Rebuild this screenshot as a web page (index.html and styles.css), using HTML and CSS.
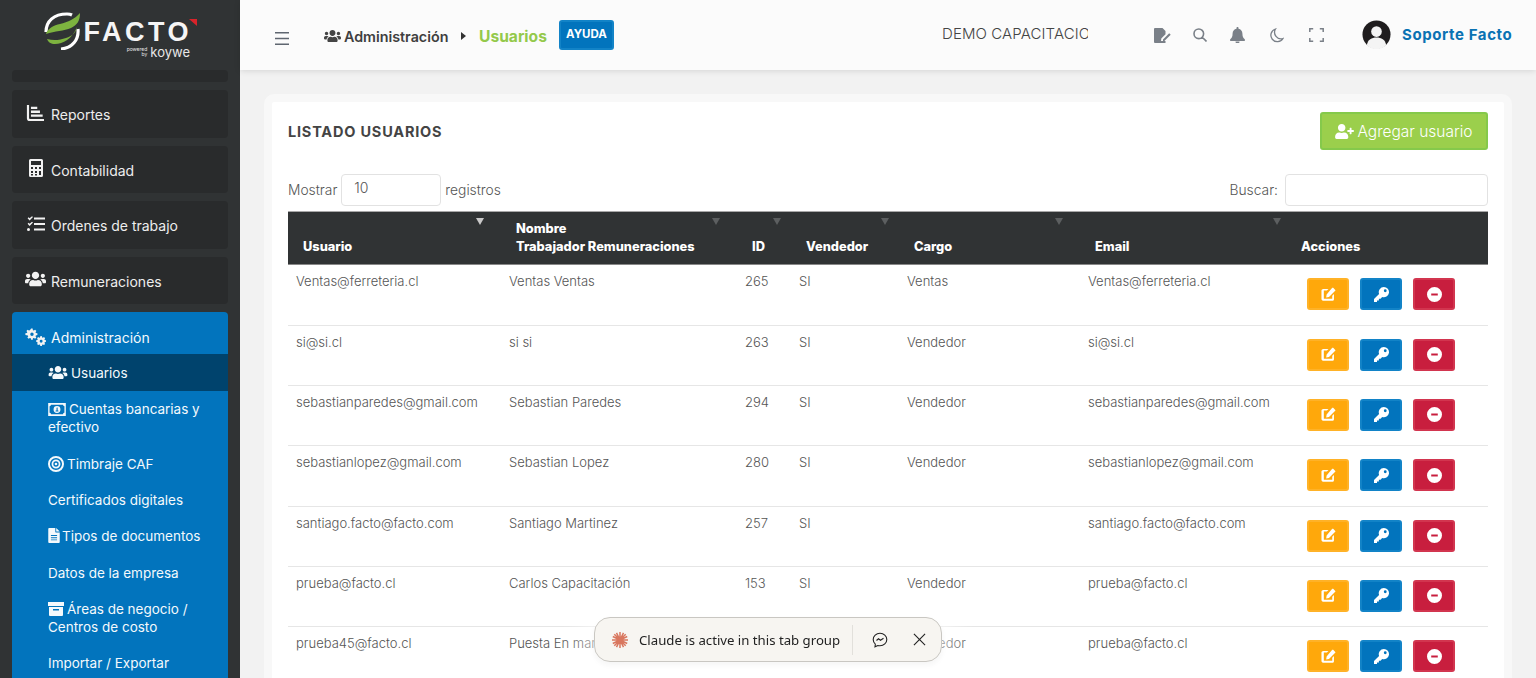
FILE: index.html
```html
<!DOCTYPE html>
<html lang="es">
<head>
  <meta charset="UTF-8">
  <meta name="viewport" content="width=device-width, initial-scale=1.0">
  <title>Listado Usuarios</title>
  <link rel="stylesheet" href="styles.css">
</head>
<body>
  <svg class="sprite" xmlns="http://www.w3.org/2000/svg">
    <symbol id="i-users" viewBox="0 0 640 512"><path d="M96 224c35.3 0 64-28.7 64-64s-28.7-64-64-64-64 28.7-64 64 28.7 64 64 64zm448 0c35.3 0 64-28.7 64-64s-28.7-64-64-64-64 28.7-64 64 28.7 64 64 64zm32 32h-64c-17.6 0-33.5 7.1-45.1 18.6 40.3 22.1 68.9 62 75.1 109.4h66c17.7 0 32-14.3 32-32v-32c0-35.3-28.7-64-64-64zm-256 0c61.9 0 112-50.1 112-112S381.9 32 320 32 208 82.1 208 144s50.1 112 112 112zm76.8 32h-8.3c-20.8 10-43.9 16-68.5 16s-47.6-6-68.5-16h-8.3C179.6 288 128 339.6 128 403.2V432c0 26.5 21.5 48 48 48h288c26.5 0 48-21.5 48-48v-28.8c0-63.6-51.6-115.2-115.2-115.2zm-223.7-13.4C161.5 263.1 145.6 256 128 256H64c-35.3 0-64 28.7-64 64v32c0 17.7 14.3 32 32 32h65.9c6.3-47.4 34.9-87.3 75.2-109.4z"/></symbol>
    <symbol id="i-chart" viewBox="0 0 20 20"><path d="M1 1h2.4v14.6c0 .6.4 1 1 1H20V19H4c-1.700 0-3-1.300-3-3zM5.500 3h7v2.600h-7zM5.500 7.300h10v2.600h-10zM5.500 11.600h13v2.600h-13z"/></symbol>
    <symbol id="i-calc" viewBox="0 0 14 18"><path fill-rule="evenodd" d="M1.500 0h11A1.500 1.500 0 0 1 14 1.500v15a1.500 1.500 0 0 1-1.500 1.500h-11A1.500 1.500 0 0 1 0 16.500v-15A1.500 1.500 0 0 1 1.500 0zM2 2v4h10V2zM2 8v2h2V8zm4 0v2h2V8zm4 0v2h2V8zM2 12v2h2v-2zm4 0v2h2v-2zm4 0v4h2v-4zM2 15v1.500h2V15zm4 0v1.500h2V15z"/></symbol>
    <symbol id="i-tasks" viewBox="0 0 18 16"><path d="M7 1.500h11v2H7zM7 7h11v2H7zM7 12.500h11v2H7zM.6 2.200l1-.9 1 1L5 .2l1 .9-3.400 3.400zM.6 7.700l1-.9 1 1L5 5.700l1 .9L2.600 10zM0 13.500a1.500 1.500 0 1 1 3 0 1.500 1.500 0 0 1-3 0z"/></symbol>
    <symbol id="i-cogs" viewBox="0 0 22 18"><path d="M7 0l1 .2.300 1.600 1 .4 1.300-.9 1.300 1.300-.9 1.300.4 1 1.600.3v1.800l-1.600.3-.4 1 .9 1.300-1.300 1.300-1.300-.9-1 .4L8.200 12H6.400l-.3-1.600-1-.4-1.300.9-1.300-1.300.9-1.300-.4-1L.4 7V5.200L2 4.900l.4-1-.9-1.300 1.300-1.300 1.300.9 1-.4L6.400 0zm.3 4.300a1.800 1.800 0 1 0 0 3.600 1.800 1.800 0 0 0 0-3.600z"/><path d="M16.800 8l.9.1.3 1.300.8.400 1.100-.7 1.200 1.200-.7 1.100.3.800 1.300.3v1.600l-1.300.3-.3.800.7 1.100-1.200 1.200-1.100-.7-.8.3-.3 1.300h-1.700l-.3-1.300-.8-.3-1.100.7-1.200-1.200.7-1.100-.3-.8-1.300-.3v-1.600l1.300-.3.3-.8-.7-1.100 1.200-1.200 1.100.7.800-.4.300-1.300zm.1 4a1.500 1.500 0 1 0 0 3 1.500 1.500 0 0 0 0-3z"/></symbol>
    <symbol id="i-money" viewBox="0 0 19 14"><path fill-rule="evenodd" d="M0 0h19v14H0zm3 2a1.500 1.500 0 0 1-1.500 1.500v7A1.500 1.500 0 0 1 3 12h13a1.500 1.500 0 0 1 1.500-1.500v-7A1.500 1.500 0 0 1 16 2zm6.500 1.300a3.700 3.700 0 1 1 0 7.400 3.700 3.700 0 0 1 0-7.400zM9 5v3.200H8V9.200h3V8.200h-.8V4.800z"/></symbol>
    <symbol id="i-target" viewBox="0 0 18 18"><path fill-rule="evenodd" d="M9 0a9 9 0 1 1 0 18A9 9 0 0 1 9 0zm0 2.200a6.800 6.800 0 1 0 0 13.600A6.800 6.800 0 0 0 9 2.200zm0 1.800a5 5 0 1 1 0 10A5 5 0 0 1 9 4zm0 2a3 3 0 1 0 0 6 3 3 0 0 0 0-6zm0 1.500a1.500 1.500 0 1 1 0 3 1.500 1.500 0 0 1 0-3z"/></symbol>
    <symbol id="i-file" viewBox="0 0 13 17"><path fill-rule="evenodd" d="M1 0h7v4.500c0 .3.200.5.500.5H13v11a1 1 0 0 1-1 1H1a1 1 0 0 1-1-1V1a1 1 0 0 1 1-1zm8 0l4 4H9zM3 8v1h7V8zm0 2.500v1h7v-1zM3 13v1h7v-1z"/></symbol>
    <symbol id="i-archive" viewBox="0 0 16 14"><path fill-rule="evenodd" d="M0 0h16v4H0zM1 5h14v8a1 1 0 0 1-1 1H2a1 1 0 0 1-1-1zm4 2v1.500h6V7z"/></symbol>
    <symbol id="i-bars" viewBox="0 0 14 13"><path d="M0 0h14v1.600H0zM0 5.700h14v1.600H0zM0 11.400h14V13H0z"/></symbol>
    <symbol id="i-sign" viewBox="0 0 17 15"><path d="M1 0h7.500l3 3v3.200L7.300 10.500 7 13h4.500v2H1a1 1 0 0 1-1-1V1a1 1 0 0 1 1-1zM2 11.500l2-2.500 1.300 1.500L4 12.800zM9 11.500l6.200-6.300 1.500 1.500-6.300 6.300H9z"/></symbol>
    <symbol id="i-search" viewBox="0 0 14 14"><path fill="none" stroke="currentColor" stroke-width="1.600" d="M5.800 1a4.800 4.800 0 1 1 0 9.600 4.800 4.800 0 0 1 0-9.600zM9.300 9.300L13.500 13.500"/></symbol>
    <symbol id="i-bell" viewBox="0 0 15 16"><path d="M7.500 0c.6 0 1 .4 1 1v.7c2.400.5 3.900 2.400 3.900 4.800 0 3.400 1.100 4.600 2.100 5.500.3.300.5.600.5.900 0 .6-.4 1-1 1H1c-.6 0-1-.4-1-1 0-.3.200-.6.500-.9 1-.9 2.100-2.100 2.100-5.500 0-2.400 1.500-4.300 3.900-4.800V1c0-.6.400-1 1-1zM5.500 14.500h4a2 2 0 0 1-4 0z"/></symbol>
    <symbol id="i-moon" viewBox="0 0 14 15"><path fill="none" stroke="currentColor" stroke-width="1.300" d="M5.500 1A6.500 6.500 0 1 0 13 10.500 6.500 6.500 0 0 1 5.500 1z"/></symbol>
    <symbol id="i-expand" viewBox="0 0 15 14"><path fill="none" stroke="currentColor" stroke-width="1.500" d="M.8 4V.8h3.400M10.800.8h3.400V4M14.200 10v3.200h-3.400M4.200 13.200H.8V10"/></symbol>
    <symbol id="i-useradd" viewBox="0 0 640 512"><path d="M624 208h-64v-64c0-8.800-7.200-16-16-16h-32c-8.800 0-16 7.200-16 16v64h-64c-8.800 0-16 7.200-16 16v32c0 8.800 7.200 16 16 16h64v64c0 8.800 7.200 16 16 16h32c8.800 0 16-7.200 16-16v-64h64c8.800 0 16-7.200 16-16v-32c0-8.800-7.200-16-16-16zm-400 48c70.700 0 128-57.300 128-128S294.700 0 224 0 96 57.300 96 128s57.300 128 128 128zm89.600 32h-16.700c-22.200 10.200-46.900 16-72.900 16s-50.600-5.800-72.900-16h-16.700C60.200 288 0 348.200 0 422.400V464c0 26.500 21.500 48 48 48h352c26.500 0 48-21.500 48-48v-41.600c0-74.200-60.200-134.400-134.400-134.400z"/></symbol>
    <symbol id="i-edit" viewBox="0 0 16 15"><path d="M2.500 1.500H8L6.300 3.300H3V12h9V8.700L13.800 7v5.500c0 1-.8 1.700-1.800 1.700H3c-1.500 0-2.500-.8-2.500-2V3.300c0-1 .9-1.800 2-1.800zM13 .4l2.200 2.200c.3.300.3.700 0 1L8.500 10.200 5.500 10.700 6 7.600 12 .4c.3-.2.700-.2 1 0z"/></symbol>
    <symbol id="i-key" viewBox="0 0 16 16"><path fill-rule="evenodd" d="M10.500 0a5.500 5.500 0 1 1-1.800 10.700L7 12.500H5.200v2H3.200V16H0v-3.200l5.400-5.400A5.500 5.500 0 0 1 10.500 0zM12 2.500a1.500 1.500 0 1 0 0 3 1.500 1.500 0 0 0 0-3z"/></symbol>
    <symbol id="i-minus" viewBox="0 0 16 16"><path fill-rule="evenodd" d="M8 0a8 8 0 1 1 0 16A8 8 0 0 1 8 0zM4.500 7v2h7V7z"/></symbol>
  </svg>

  <div class="app">
    <aside class="sidebar">
      <div class="logo">
        <svg class="logo-globe" viewBox="0 0 38 38">
          <path fill="none" stroke="#fff" stroke-width="3.200" d="M3 20C3 9 11 2 24 2c2 0 4 .5 5 1M35 17c1 11-6 19-17 20"/>
          <path fill="#7db33f" d="M37 1c0 8-3 12-9 15-7 3-16 3-25 6 1-5 8-9 14-10 8-2 15-5 20-11z"/>
          <path fill="#7db33f" d="M34 15c-1 6-5 9-11 11-6 2-12 3-19 1 1 3 4 5 8 5 8 0 17-5 22-17z"/>
        </svg>
        <div class="logo-text">
          <span class="logo-name">FACTO</span>
          <span class="logo-by"><small>powered by</small> koywe</span>
        </div>
        <span class="logo-mark"></span>
      </div>
      <nav class="menu">
        <div class="menu-item menu-stub"></div>
        <a class="menu-item"><svg class="mi-icon mi-chart"><use href="#i-chart"/></svg>Reportes</a>
        <a class="menu-item"><svg class="mi-icon mi-calc"><use href="#i-calc"/></svg>Contabilidad</a>
        <a class="menu-item"><svg class="mi-icon mi-tasks"><use href="#i-tasks"/></svg>Ordenes de trabajo</a>
        <a class="menu-item"><svg class="mi-icon mi-users"><use href="#i-users"/></svg>Remuneraciones</a>
        <div class="menu-open">
          <a class="menu-head"><svg class="mi-icon mi-users"><use href="#i-cogs"/></svg>Administración</a>
          <a class="sub-item active"><svg class="si-users"><use href="#i-users"/></svg>Usuarios</a>
          <a class="sub-item"><svg class="si-money"><use href="#i-money"/></svg>Cuentas bancarias y efectivo</a>
          <a class="sub-item"><svg class="si-target"><use href="#i-target"/></svg>Timbraje CAF</a>
          <a class="sub-item">Certificados digitales</a>
          <a class="sub-item"><svg class="si-file"><use href="#i-file"/></svg>Tipos de documentos</a>
          <a class="sub-item">Datos de la empresa</a>
          <a class="sub-item"><svg class="si-archive"><use href="#i-archive"/></svg>Áreas de negocio / Centros de costo</a>
          <a class="sub-item">Importar / Exportar</a>
        </div>
      </nav>
    </aside>

    <main class="main">
      <header class="topbar">
        <svg class="burger"><use href="#i-bars"/></svg>
        <div class="crumbs">
          <svg class="crumb-icon"><use href="#i-users"/></svg>
          <span class="crumb">Administración</span>
          <span class="crumb-caret"></span>
          <span class="crumb-now">Usuarios</span>
          <a class="help">AYUDA</a>
        </div>
        <div class="company">DEMO CAPACITACION</div>
        <div class="tools">
          <svg class="tool-sign"><use href="#i-sign"/></svg>
          <svg class="tool-search"><use href="#i-search"/></svg>
          <svg class="tool-bell"><use href="#i-bell"/></svg>
          <svg class="tool-moon"><use href="#i-moon"/></svg>
          <svg class="tool-expand"><use href="#i-expand"/></svg>
        </div>
        <div class="account">
          <svg class="avatar" viewBox="0 0 30 30">
            <circle cx="15" cy="15" r="14.500" fill="#1f1d1e"/>
            <circle cx="15" cy="12" r="5.500" fill="#f4f4f4"/>
            <path fill="#f4f4f4" d="M5 26c1-6 5-8 10-8s9 2 10 8c-3 3-6 4-10 4s-7-1-10-4z"/>
          </svg>
          <span class="account-name">Soporte Facto</span>
        </div>
      </header>

      <section class="content">
        <div class="card">
          <div class="card-head">
            <h2 class="card-title">LISTADO USUARIOS</h2>
            <a class="btn-add"><svg class="add-icon"><use href="#i-useradd"/></svg>Agregar usuario</a>
          </div>
          <div class="filters">
            <label class="filter">Mostrar <span class="length-box">10</span> registros</label>
            <label class="filter">Buscar: <input class="search-box" type="text"></label>
          </div>
          <table class="users">
            <colgroup>
              <col class="c-user"><col class="c-name"><col class="c-id"><col class="c-seller"><col class="c-role"><col class="c-mail"><col class="c-act">
            </colgroup>
            <thead>
              <tr>
                <th>Usuario<span class="sort sort-on"></span></th>
                <th>Nombre<br>Trabajador Remuneraciones<span class="sort"></span></th>
                <th>ID<span class="sort sort-near"></span></th>
                <th>Vendedor<span class="sort sort-near"></span></th>
                <th>Cargo<span class="sort"></span></th>
                <th>Email<span class="sort sort-close"></span></th>
                <th>Acciones</th>
              </tr>
            </thead>
            <tbody>
              <tr>
                <td>Ventas@ferreteria.cl</td><td>Ventas Ventas</td><td>265</td><td>SI</td><td>Ventas</td><td>Ventas@ferreteria.cl</td>
                <td class="actions"><a class="act act-edit"><svg><use href="#i-edit"/></svg></a><a class="act act-key"><svg><use href="#i-key"/></svg></a><a class="act act-del"><svg><use href="#i-minus"/></svg></a></td>
              </tr>
              <tr>
                <td>si@si.cl</td><td>si si</td><td>263</td><td>SI</td><td>Vendedor</td><td>si@si.cl</td>
                <td class="actions"><a class="act act-edit"><svg><use href="#i-edit"/></svg></a><a class="act act-key"><svg><use href="#i-key"/></svg></a><a class="act act-del"><svg><use href="#i-minus"/></svg></a></td>
              </tr>
              <tr>
                <td>sebastianparedes@gmail.com</td><td>Sebastian Paredes</td><td>294</td><td>SI</td><td>Vendedor</td><td>sebastianparedes@gmail.com</td>
                <td class="actions"><a class="act act-edit"><svg><use href="#i-edit"/></svg></a><a class="act act-key"><svg><use href="#i-key"/></svg></a><a class="act act-del"><svg><use href="#i-minus"/></svg></a></td>
              </tr>
              <tr>
                <td>sebastianlopez@gmail.com</td><td>Sebastian Lopez</td><td>280</td><td>SI</td><td>Vendedor</td><td>sebastianlopez@gmail.com</td>
                <td class="actions"><a class="act act-edit"><svg><use href="#i-edit"/></svg></a><a class="act act-key"><svg><use href="#i-key"/></svg></a><a class="act act-del"><svg><use href="#i-minus"/></svg></a></td>
              </tr>
              <tr>
                <td>santiago.facto@facto.com</td><td>Santiago Martinez</td><td>257</td><td>SI</td><td></td><td>santiago.facto@facto.com</td>
                <td class="actions"><a class="act act-edit"><svg><use href="#i-edit"/></svg></a><a class="act act-key"><svg><use href="#i-key"/></svg></a><a class="act act-del"><svg><use href="#i-minus"/></svg></a></td>
              </tr>
              <tr>
                <td>prueba@facto.cl</td><td>Carlos Capacitación</td><td>153</td><td>SI</td><td>Vendedor</td><td>prueba@facto.cl</td>
                <td class="actions"><a class="act act-edit"><svg><use href="#i-edit"/></svg></a><a class="act act-key"><svg><use href="#i-key"/></svg></a><a class="act act-del"><svg><use href="#i-minus"/></svg></a></td>
              </tr>
              <tr>
                <td>prueba45@facto.cl</td><td>Puesta En marcha</td><td>301</td><td>SI</td><td>Vendedor</td><td>prueba@facto.cl</td>
                <td class="actions"><a class="act act-edit"><svg><use href="#i-edit"/></svg></a><a class="act act-key"><svg><use href="#i-key"/></svg></a><a class="act act-del"><svg><use href="#i-minus"/></svg></a></td>
              </tr>
            </tbody>
          </table>
        </div>
      </section>
    </main>
  </div>

  <div class="claude-bar">
    <svg class="claude-star" viewBox="0 0 16 16">
      <path fill="none" stroke="#d9775f" stroke-width="1.500" d="M8 0v16M0 8h16M2.300 2.300l11.400 11.400M13.700 2.300L2.300 13.700M4.500 .8l7 14.400M11.500 .8l-7 14.400M.8 4.500l14.400 7M15.200 4.500L.8 11.500"/>
    </svg>
    <span class="claude-text">Claude is active in this tab group</span>
    <span class="claude-sep"></span>
    <svg class="claude-chat" viewBox="0 0 16 16">
      <path fill="none" stroke="#222" stroke-width="1.100" d="M8 1.200c3.800 0 6.800 2.800 6.800 6.300S11.800 13.800 8 13.800c-.8 0-1.500-.1-2.200-.3L3 14.800l.3-2.600C2 11 1.200 9.400 1.200 7.500 1.200 4 4.200 1.200 8 1.200zM4.500 8.500L6.500 6.800l2 1.500 3-2"/>
    </svg>
    <svg class="claude-close" viewBox="0 0 14 14">
      <path fill="none" stroke="#222" stroke-width="1.200" d="M1 1l12 12M13 1L1 13"/>
    </svg>
  </div>
</body>
</html>
```

FILE: styles.css
```css
* {
  margin: 0;
  padding: 0;
  box-sizing: border-box;
}
html, body {
  height: 100%;
  overflow: hidden;
}
body {
  font-family: Inter, "Open Sans", sans-serif;
  background-color: #f2f2f2;
  color: #555;
}
.sprite {
  display: none;
}
svg {
  fill: currentColor;
  display: block;
  flex-shrink: 0;
}
.app {
  display: flex;
  height: 100vh;
}

/* sidebar */
.sidebar {
  width: 240px;
  flex-shrink: 0;
  background-color: #303334;
  overflow: hidden;
}
.logo {
  height: 70px;
  display: flex;
  padding: 12px 0 0 43px;
  gap: 9px;
  position: relative;
}
.logo-globe {
  width: 38px;
  height: 38px;
}
.logo-text {
  display: flex;
  flex-direction: column;
  align-items: flex-end;
  width: 102px;
}
.logo-name {
  font-family: "Liberation Sans", sans-serif;
  font-weight: 700;
  font-size: 27px;
  line-height: 28px;
  letter-spacing: 3.500px;
  color: #f5f5f5;
  margin-top: 6px;
  white-space: nowrap;
}
.logo-by {
  display: flex;
  align-items: center;
  gap: 3px;
  color: #e8e8e8;
  font-size: 13px;
  line-height: 12px;
  margin-right: 2px;
}
.logo-by small {
  font-size: 5px;
  line-height: 5px;
  width: 24px;
  text-align: right;
}
.logo-mark {
  position: absolute;
  left: 189px;
  top: 19px;
  border-top: 7px solid #d8232a;
  border-left: 8px solid transparent;
}
.menu {
  display: flex;
  flex-direction: column;
  gap: 8px;
  padding: 0 12px;
  font-size: 14px;
}
.menu-item {
  height: 47.500px;
  display: flex;
  align-items: center;
  background-color: #292b2c;
  border-radius: 4px;
  color: #eee;
  position: relative;
  padding-left: 39px;
  padding-top: 2px;
}
.menu-stub {
  height: 12px;
}
.mi-icon {
  position: absolute;
  left: 13px;
  top: 50%;
  margin-top: -10px;
  height: 18px;
  width: 20px;
  color: #f2f2f2;
}
.mi-calc {
  left: 17px;
  width: 14px;
}
.mi-tasks {
  left: 15px;
  width: 18px;
}
.mi-users {
  width: 21px;
  left: 13px;
}
.menu-open {
  background-color: #0274bd;
  border-radius: 4px 4px 0 0;
  color: #f4f9fc;
  padding-bottom: 10px;
}
.menu-head {
  display: block;
  position: relative;
  height: 42px;
  padding: 17px 0 0 39px;
  line-height: 18px;
}
.menu-head .mi-icon {
  top: 16px;
  margin-top: 0;
}
.sub-item {
  display: block;
  padding: 9.200px 12px 9.200px 36px;
  line-height: 18px;
  font-size: 13.500px;
}
.sub-item svg {
  display: inline-block;
  vertical-align: -2px;
  margin-right: 3px;
}
.sub-item.active {
  background-color: #00436d;
  padding-top: 10px;
  height: 37px;
}
.si-users {
  width: 20px;
  height: 15px;
}
.si-money {
  width: 18px;
  height: 13px;
}
.si-target {
  width: 16px;
  height: 16px;
  vertical-align: -3px !important;
}
.si-file {
  width: 12px;
  height: 15px;
  margin-right: 2px !important;
}
.si-archive {
  width: 16px;
  height: 14px;
}

/* topbar */
.main {
  flex: 1;
  min-width: 0;
  display: flex;
  flex-direction: column;
}
.topbar {
  height: 70px;
  flex-shrink: 0;
  display: flex;
  align-items: center;
  background-color: #fbfbfb;
  box-shadow: 0 1px 6px rgba(0, 0, 0, 0.12);
  position: relative;
  padding-left: 35px;
}
.burger {
  width: 14px;
  height: 13px;
  color: #5f6670;
  margin-top: 6px;
}
.crumbs {
  display: flex;
  align-items: center;
  margin-left: 35px;
  width: 290px;
}
.crumb-icon {
  width: 17px;
  height: 14px;
  color: #444;
  margin-right: 3px;
  margin-top: 2px;
}
.crumb {
  font-size: 14.300px;
  font-weight: 600;
  color: #3f3f3f;
  width: 107px;
  margin-top: 2px;
  white-space: nowrap;
}
.crumb-caret {
  border-left: 5px solid #333;
  border-top: 4px solid transparent;
  border-bottom: 4px solid transparent;
  margin: 2px 13px 0 10px;
}
.crumb-now {
  font-size: 15.600px;
  font-weight: 700;
  color: #94c94b;
  width: 80px;
  margin-top: 2px;
}
.help {
  width: 55px;
  height: 30px;
  flex-shrink: 0;
  background-color: #0274bd;
  border: 2px solid #1283c7;
  border-radius: 3px;
  color: #fff;
  font-size: 11.500px;
  font-weight: 700;
  text-align: center;
  line-height: 25px;
}
.company {
  width: 146px;
  margin-left: 328px;
  overflow: hidden;
  white-space: nowrap;
  font-size: 15px;
  font-weight: 300;
  letter-spacing: 0.100px;
  color: #444;
  margin-top: -4px;
}
.tools {
  display: flex;
  align-items: center;
  margin-left: 66px;
  color: #7a8088;
  height: 16px;
}
.tool-sign {
  width: 17px;
  height: 15px;
  margin-right: 22px;
}
.tool-search {
  width: 14px;
  height: 14px;
  margin-right: 23px;
}
.tool-bell {
  width: 15px;
  height: 16px;
  margin-right: 25px;
}
.tool-moon {
  width: 14px;
  height: 15px;
  margin-right: 25px;
}
.tool-expand {
  width: 15px;
  height: 14px;
}
.account {
  display: flex;
  align-items: center;
  margin-left: 38px;
  margin-top: -1px;
}
.avatar {
  width: 29px;
  height: 29px;
}
.account-name {
  margin-left: 11px;
  font-size: 15px;
  font-weight: 700;
  letter-spacing: 0.600px;
  color: #0a72b3;
  white-space: nowrap;
}

/* card */
.content {
  padding: 24px 24px 0;
}
.card {
  background-color: #fff;
  border: 8px solid #f8f8f8;
  border-radius: 10px;
  padding: 10px 16px 0;
}
.card-head {
  display: flex;
  justify-content: space-between;
  align-items: center;
  height: 38px;
}
.card-title {
  font-size: 14.500px;
  font-weight: 700;
  color: #444;
  letter-spacing: 0.800px;
}
.btn-add {
  width: 168px;
  height: 38px;
  display: flex;
  align-items: center;
  justify-content: center;
  gap: 3px;
  background-color: #9bcf4c;
  border: 2px solid #85c94b;
  border-radius: 3px;
  color: #fff;
  font-size: 15.500px;
  font-weight: 300;
}
.add-icon {
  width: 19px;
  height: 15px;
}
.filters {
  display: flex;
  justify-content: space-between;
  align-items: center;
  margin-top: 24px;
  margin-bottom: 5.400px;
  height: 32px;
}
.filter {
  display: flex;
  align-items: center;
  font-size: 13.800px;
  font-weight: 300;
  color: #555;
  gap: 4px;
}
.length-box {
  width: 100px;
  height: 32px;
  border: 1px solid #e2e2e2;
  border-radius: 4px;
  padding: 4px 12px;
  font-size: 14px;
}
.search-box {
  width: 203px;
  height: 32px;
  margin-left: 3px;
  border: 1px solid #e2e2e2;
  border-radius: 4px;
  outline: none;
}

/* table */
.users {
  width: 100%;
  table-layout: fixed;
  border-collapse: collapse;
}
.c-user { width: 213px; }
.c-name { width: 236px; }
.c-id { width: 54px; }
.c-seller { width: 108px; }
.c-role { width: 181px; }
.c-mail { width: 206px; }
.c-act { width: 202px; }
.users th {
  position: relative;
  height: 53px;
  padding: 0 0 8px 15px;
  background-color: #303334;
  border-top: 1px solid #a8a8a8;
  border-bottom: 1px solid #888;
  color: #fff;
  font-size: 12.800px;
  font-weight: 800;
  line-height: 18px;
  text-align: left;
  vertical-align: bottom;
  white-space: nowrap;
}
.users td {
  height: 60.300px;
  padding: 7px 8px 0;
  border-bottom: 1px solid #e6e6e6;
  font-size: 13px;
  font-weight: 300;
  line-height: 18px;
  color: #555;
  vertical-align: top;
  white-space: nowrap;
}
.sort {
  position: absolute;
  top: 6px;
  right: 17px;
  border-top: 7px solid #5c5f60;
  border-left: 4px solid transparent;
  border-right: 4px solid transparent;
}
.sort-on {
  border-top-color: #c9c9c9;
}
.sort-near {
  right: 10px;
}
.sort-close {
  right: 5px;
}
.users .actions {
  padding: 13px 0 0 21px;
}
.actions {
  font-size: 0;
}
.act {
  display: inline-flex;
  align-items: center;
  justify-content: center;
  width: 42px;
  height: 32px;
  margin-right: 11px;
  border-radius: 3px;
  border: 2px solid;
  color: #fff;
}
.act svg {
  width: 15px;
  height: 15px;
}
.act-edit {
  background-color: #ffa80b;
  border-color: #ffb227;
}
.act-key {
  background-color: #0274bd;
  border-color: #1283c7;
}
.act-del {
  background-color: #c81e3e;
  border-color: #d2354f;
}

/* tab group notice */
.claude-bar {
  position: fixed;
  left: 594px;
  top: 617px;
  width: 348px;
  height: 45px;
  display: flex;
  align-items: center;
  background-color: #f7f5f1;
  border: 1px solid #c9c7c2;
  border-radius: 16px;
  box-shadow: 0 0 26px 14px rgba(255, 255, 255, 0.55), 0 3px 6px rgba(0, 0, 0, 0.08);
  font-family: "Noto Sans", sans-serif;
  font-size: 13.200px;
  color: #222;
}
.claude-star {
  width: 16px;
  height: 16px;
  margin-left: 17px;
}
.claude-text {
  margin-left: 11px;
  white-space: nowrap;
  width: 213px;
}
.claude-sep {
  width: 1px;
  height: 30px;
  background-color: #e2e0db;
}
.claude-chat {
  width: 16px;
  height: 16px;
  margin-left: 19px;
}
.claude-close {
  width: 13px;
  height: 13px;
  margin-left: 25px;
}
```
